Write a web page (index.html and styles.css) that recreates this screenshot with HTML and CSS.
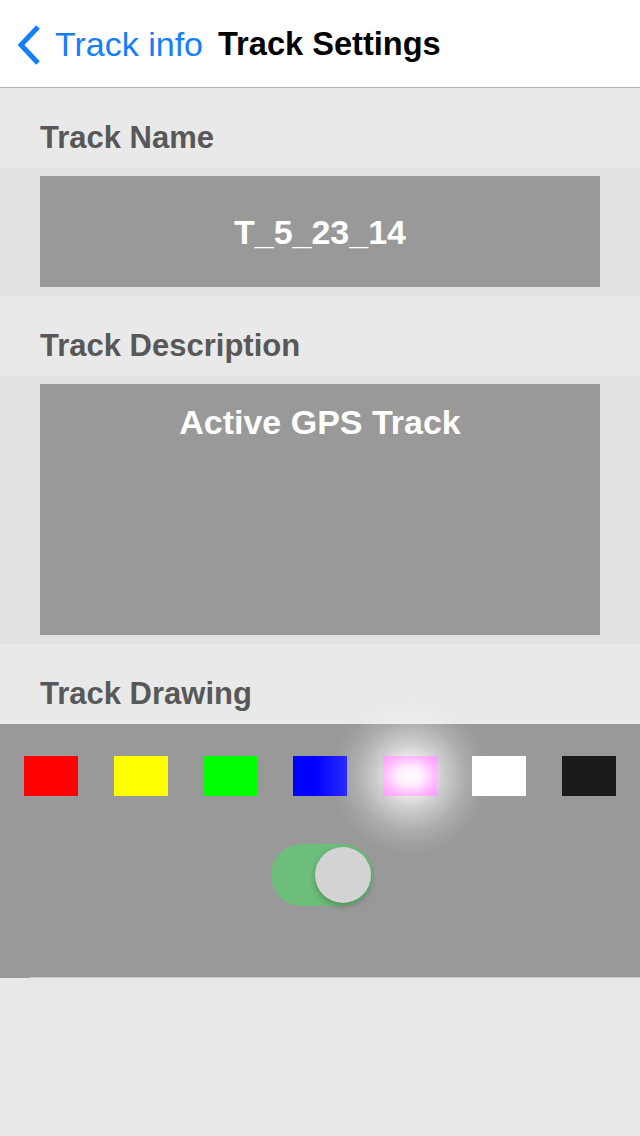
FILE: index.html
```html
<!DOCTYPE html>
<html>
<head>
<meta charset="utf-8">
<link rel="stylesheet" href="styles.css">
</head>
<body>
<div class="nav">
  <svg class="chev" width="26" height="42" viewBox="0 0 26 42"><polyline points="22,3 5,21 22,39" fill="none" stroke="#147efb" stroke-width="5" stroke-linecap="butt" stroke-linejoin="miter"/></svg>
  <span class="back">Track info</span>
  <span class="title">Track Settings</span>
</div>
<div class="section-title">Track Name</div>
<div class="cell">
  <div class="box name-box">T_5_23_14</div>
</div>
<div class="section-title">Track Description</div>
<div class="cell">
  <div class="box desc-box">Active GPS Track</div>
</div>
<div class="section-title">Track Drawing</div>
<div class="drawing">
  <div class="swatches">
    <div class="glow"></div>
    <div class="swatch red"></div>
    <div class="swatch yellow"></div>
    <div class="swatch green"></div>
    <div class="swatch blue"></div>
    <div class="swatch pink"></div>
    <div class="swatch white"></div>
    <div class="swatch black"></div>
  </div>
  <div class="toggle-row">
    <div class="toggle"><div class="knob"></div></div>
  </div>
</div>
<div class="sep"></div>
</body>
</html>
```
FILE: styles.css
```css
html, body {
  margin: 0;
  padding: 0;
}
body {
  background: #e8e8e8;
  font-family: "Liberation Sans", Arial, sans-serif;
  width: 640px;
  min-height: 1136px;
}
.nav {
  height: 88px;
  box-sizing: border-box;
  background: #fff;
  border-bottom: 1px solid #b4b4b4;
  display: flex;
  align-items: flex-start;
  padding: 28px 0 0 16px;
  line-height: 32px;
}
.chev {
  margin-top: -4px;
  margin-right: 13px;
  flex: none;
}
.back {
  color: #147efb;
  font-size: 34px;
  margin-right: 15px;
}
.title {
  color: #000;
  font-size: 32.6px;
  font-weight: bold;
}
.section-title {
  height: 80px;
  box-sizing: border-box;
  padding: 34px 40px 0;
  line-height: 31px;
  font-size: 31px;
  font-weight: bold;
  color: #585858;
  background: #e9e9e9;
}
.cell {
  background: #e2e2e2;
  padding: 8px 40px 9px;
}
.box {
  background: #999;
  color: #fff;
  font-size: 34px;
  font-weight: bold;
  text-align: center;
  line-height: 34px;
}
.name-box {
  height: 111px;
  display: flex;
  align-items: center;
  justify-content: center;
}
.desc-box {
  height: 251px;
  box-sizing: border-box;
  padding-top: 21px;
}
.drawing {
  background: #999;
  height: 253px;
  box-sizing: border-box;
  padding-top: 32px;
}
.swatches {
  position: relative;
  display: flex;
  justify-content: space-between;
  padding: 0 24px;
}
.glow {
  position: absolute;
  left: 330px;
  top: -60px;
  width: 160px;
  height: 160px;
  background: radial-gradient(circle closest-side at center, rgba(255,255,255,1) 0%, rgba(255,255,255,0.85) 20%, rgba(255,255,255,0.5) 42%, rgba(255,255,255,0.2) 68%, rgba(255,255,255,0.05) 88%, rgba(255,255,255,0) 100%);
  pointer-events: none;
  z-index: 0;
}
.swatch {
  position: relative;
  z-index: 1;
  width: 54px;
  height: 40px;
}
.red { background: #ff0000; }
.yellow { background: #ffff00; }
.green { background: #00ff00; }
.blue { background: linear-gradient(to right, #0000ff 40%, #2a2aff 100%); }
.pink { background: radial-gradient(ellipse at center, #ffffff 0%, #fff0ff 30%, #ffb0ff 75%, #ff99ff 100%); }
.white { background: #ffffff; }
.black { background: #1a1a1a; }
.toggle-row {
  display: flex;
  justify-content: center;
  padding-left: 4px;
  margin-top: 48px;
}
.toggle {
  width: 102px;
  height: 62px;
  border-radius: 31px;
  background: #6dbd7b;
  position: relative;
}
.knob {
  position: absolute;
  right: 2px;
  top: 3px;
  width: 56px;
  height: 56px;
  border-radius: 50%;
  background: #d3d3d3;
  box-shadow: 0 3px 6px rgba(0,0,0,0.25);
}
.sep {
  height: 1px;
  background: linear-gradient(to right, #999 30px, #c8c8c8 30px);
}
```
